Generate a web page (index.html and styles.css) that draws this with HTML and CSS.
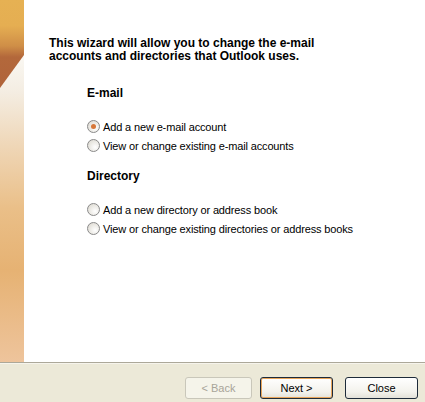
FILE: index.html
```html
<!DOCTYPE html>
<html>
<head>
<meta charset="utf-8">
<link rel="stylesheet" href="styles.css">
</head>
<body>
<div class="wizard">
  <div class="main">
    <div class="strip">
      <svg width="24" height="362" viewBox="0 0 24 362" xmlns="http://www.w3.org/2000/svg">
        <defs>
          <linearGradient id="top" x1="0" y1="0" x2="0" y2="1">
            <stop offset="0" stop-color="#e6b153"/>
            <stop offset="0.28" stop-color="#e5ae52"/>
            <stop offset="0.5" stop-color="#cf8e47"/>
            <stop offset="0.62" stop-color="#b3683b"/>
            <stop offset="1" stop-color="#b0633a"/>
          </linearGradient>
          <linearGradient id="low" x1="0" y1="0" x2="0" y2="1">
            <stop offset="0" stop-color="#faf8f3"/>
            <stop offset="0.12" stop-color="#f4ede2"/>
            <stop offset="0.3" stop-color="#efd6b6"/>
            <stop offset="0.5" stop-color="#eabf88"/>
            <stop offset="0.7" stop-color="#e6b273"/>
            <stop offset="1" stop-color="#eec49c"/>
          </linearGradient>
        </defs>
        <rect x="0" y="0" width="24" height="92" fill="url(#top)"/>
        <polygon points="24,55 0,88 0,362 24,362" fill="url(#low)"/>
      </svg>
    </div>
    <div class="content">
      <p class="intro">This wizard will allow you to change the e-mail accounts and directories that Outlook uses.</p>
      <div class="group">
        <h2 class="heading">E-mail</h2>
        <div class="options">
          <label class="option"><span class="radio checked"></span>Add a new e-mail account</label>
          <label class="option"><span class="radio"></span>View or change existing e-mail accounts</label>
        </div>
      </div>
      <div class="group">
        <h2 class="heading">Directory</h2>
        <div class="options">
          <label class="option"><span class="radio"></span>Add a new directory or address book</label>
          <label class="option"><span class="radio"></span>View or change existing directories or address books</label>
        </div>
      </div>
    </div>
  </div>
  <div class="footer">
    <button class="btn disabled">&lt; Back</button>
    <button class="btn next">Next &gt;</button>
    <button class="btn close">Close</button>
  </div>
</div>
</body>
</html>
```

FILE: styles.css
```css
html, body {
  margin: 0;
  padding: 0;
  background: #ffffff;
}
body {
  font-family: Tahoma, "DejaVu Sans", "Liberation Sans", sans-serif;
  font-size: 11px;
  color: #000;
}
.wizard {
  width: 425px;
  height: 402px;
  display: flex;
  flex-direction: column;
}
.main {
  height: 362px;
  display: flex;
  background: #fff;
}
.strip {
  width: 24px;
  flex: none;
}
.strip svg {
  display: block;
}
.content {
  flex: 1;
  padding: 37px 0 0 25px;
}
.intro {
  margin: 0;
  font-family: "Liberation Sans", sans-serif;
  font-weight: bold;
  font-size: 12px;
  line-height: 13px;
  width: 300px;
}
.group {
  padding-left: 38px;
}
.heading {
  margin: 0;
  font-family: "Liberation Sans", sans-serif;
  font-weight: bold;
  font-size: 12px;
  line-height: 13px;
}
.group:first-of-type .heading {
  margin-top: 24px;
}
.group + .group .heading {
  margin-top: 18px;
}
.options {
  display: flex;
  flex-direction: column;
  gap: 6px;
  margin-top: 20px;
}
.option {
  display: flex;
  align-items: center;
  gap: 3px;
  height: 13px;
  font-family: "Liberation Sans", sans-serif;
  font-size: 11px;
  letter-spacing: -0.14px;
}
.radio {
  width: 11px;
  height: 11px;
  border-radius: 50%;
  border: 1px solid #8a8a8a;
  background: radial-gradient(circle at 65% 65%, #ffffff 0%, #e8e6e0 60%, #d8d4cc 100%);
  position: relative;
  flex: none;
}
.radio.checked::after {
  content: "";
  position: absolute;
  left: 3px;
  top: 3px;
  width: 5px;
  height: 5px;
  border-radius: 50%;
  background: #d6773a;
}
.footer {
  flex: 1;
  background: #ece9d8;
  border-top: 1px solid #aca899;
  box-shadow: inset 0 1px 0 #f6f4ec;
  display: flex;
  align-items: flex-start;
  padding: 14px 0 0 185px;
}
.btn {
  height: 22px;
  font-family: "Liberation Sans", sans-serif;
  font-size: 11px;
  color: #000;
  background: linear-gradient(#ffffff, #f3f2ec 70%, #e3e1d8);
  border: 1px solid #1e2b3a;
  border-radius: 3px;
  padding: 0;
  margin: 0;
}
.btn.disabled {
  width: 67px;
  color: #a8a499;
  border-color: #c9c7ba;
  background: #f5f4ea;
}
.btn.next {
  width: 73px;
  margin-left: 8px;
  box-shadow: inset 0 0 0 1px #e8a55a;
}
.btn.close {
  width: 73px;
  margin-left: 12px;
}
```
